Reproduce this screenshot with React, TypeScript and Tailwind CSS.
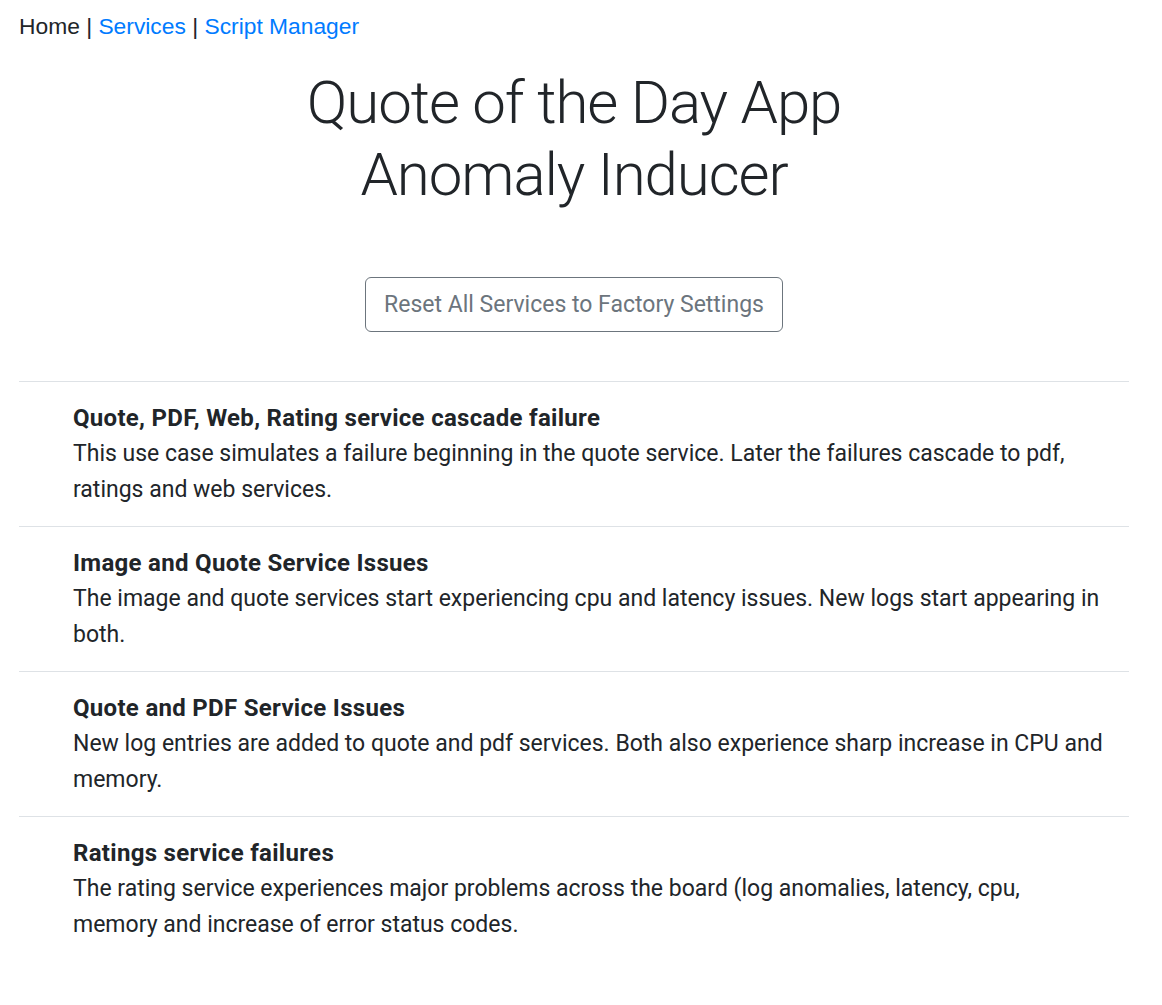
const scenarios = [
  {
    title: "Quote, PDF, Web, Rating service cascade failure",
    text: "This use case simulates a failure beginning in the quote service. Later the failures cascade to pdf, ratings and web services.",
  },
  {
    title: "Image and Quote Service Issues",
    text: "The image and quote services start experiencing cpu and latency issues. New logs start appearing in both.",
  },
  {
    title: "Quote and PDF Service Issues",
    text: "New log entries are added to quote and pdf services. Both also experience sharp increase in CPU and memory.",
  },
  {
    title: "Ratings service failures",
    text: "The rating service experiences major problems across the board (log anomalies, latency, cpu, memory and increase of error status codes.",
  },
];

export default function App() {
  return (
    <div className="min-h-screen bg-white text-[#212529] font-['Roboto',sans-serif]">
      <nav className="pt-[10px] pl-[19px] text-[22.8px] leading-[32px] font-['Liberation_Sans',Arial,sans-serif]">
        Home | <a href="#" className="text-[#007bff]">Services</a> |{" "}
        <a href="#" className="text-[#007bff]">Script Manager</a>
      </nav>

      <div className="ml-[19px] w-[1110px]">
        <h1 className="mt-[25px] text-center text-[60px] leading-[72px] font-light tracking-[-1.1px]">
          Quote of the Day App
          <br />
          Anomaly Inducer
        </h1>

        <div className="mt-[66px] flex justify-center">
          <button className="h-[55px] rounded-[6px] border border-[#6c757d] px-[18px] text-[23px] leading-[36px] text-[#6c757d]">
            Reset All Services to Factory Settings
          </button>
        </div>

        <ul className="mt-[49px]">
          {scenarios.map((s) => (
            <li key={s.title} className="border-t border-[#dee2e6] pl-[54px] pr-[20px] py-[18px] text-[23px] leading-[36px]">
              <div className="text-[24px] font-bold tracking-[0.3px]">{s.title}</div>
              <div>{s.text}</div>
            </li>
          ))}
        </ul>
      </div>
    </div>
  );
}
